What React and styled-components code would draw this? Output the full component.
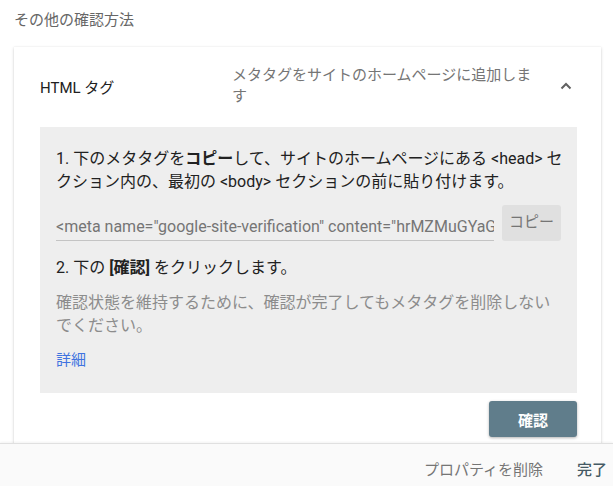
import React from "react";
import styled, { createGlobalStyle } from "styled-components";

const Global = createGlobalStyle`
  html, body { margin: 0; padding: 0; background: #fff; }
  body { font-family: Roboto, "Noto Sans CJK JP", "Noto Sans", sans-serif; }
  * { box-sizing: border-box; }
`;

const Page = styled.div`
  height: 486px;
  display: flex;
  flex-direction: column;
  overflow: hidden;
`;

const Scroll = styled.div`
  flex: 1;
  overflow: hidden;
  padding: 0 12px 0 14px;
`;

const Title = styled.div`
  font-size: 15px;
  line-height: 20px;
  color: #666;
  padding-top: 10px;
  margin-bottom: 17px;
`;

const Card = styled.div`
  background: #fff;
  box-shadow: 0 1px 3px rgba(0, 0, 0, 0.18), 0 0 1px rgba(0, 0, 0, 0.08);
  padding: 18px 24px 20px 26px;
`;

const Header = styled.div`
  display: flex;
  align-items: center;
`;

const Name = styled.div`
  width: 192px;
  font-size: 15px;
  color: #212121;
`;

const Desc = styled.div`
  width: 312px;
  font-size: 15px;
  line-height: 21px;
  color: #757575;
`;

const Chevron = styled.div`
  margin-left: 15px;
  display: flex;
  align-items: center;
`;

const Panel = styled.div`
  margin-top: 20px;
  background: #eeeeee;
  padding: 20px 16px 21px 16px;
`;

const Text = styled.div`
  font-size: 16px;
  line-height: 23px;
  color: ${(p) => (p.$muted ? "#8c8c8c" : "#212121")};
  margin-top: ${(p) => p.$mt || 0}px;
  margin-right: ${(p) => (p.$wide ? -5 : 0)}px;
`;

const InputRow = styled.div`
  display: flex;
  align-items: flex-end;
  gap: 8px;
  margin-top: 12px;
`;

const Field = styled.div`
  flex: 1;
  font-size: 16px;
  color: #757575;
  white-space: nowrap;
  overflow: hidden;
  border-bottom: 1px solid #c4c4c4;
  padding-bottom: 3px;
  line-height: 20px;
`;

const CopyBtn = styled.div`
  width: 59px;
  height: 36px;
  border-radius: 3px;
  background: #e0e0e0;
  color: #757575;
  font-size: 15px;
  display: flex;
  align-items: center;
  justify-content: center;
  padding-bottom: 6px;
`;

const Link = styled.div`
  font-size: 15px;
  line-height: 23px;
  color: #3f73e0;
  margin-top: 12px;
`;

const Actions = styled.div`
  display: flex;
  justify-content: flex-end;
  margin-top: 8px;
`;

const Confirm = styled.div`
  width: 88px;
  height: 36px;
  border-radius: 3px;
  background: #607d8b;
  color: #fff;
  font-weight: 700;
  font-size: 15px;
  display: flex;
  align-items: center;
  justify-content: center;
  box-shadow: 0 1px 3px rgba(0, 0, 0, 0.3);
`;

const Footer = styled.div`
  height: 43px;
  flex: none;
  background: #fafafa;
  border-top: 1px solid #e0e0e0;
  box-shadow: 0 -1px 2px rgba(0, 0, 0, 0.05);
  display: flex;
  align-items: center;
  justify-content: flex-end;
  gap: 34px;
  padding: 6px 6px 0 0;
  position: relative;
`;

const FootBtn = styled.div`
  font-size: 15px;
  color: ${(p) => (p.$primary ? "#455a64" : "#757575")};
  font-weight: ${(p) => (p.$primary ? 500 : 400)};
`;

export default function App() {
  return (
    <Page>
      <Global />
      <Scroll>
        <Title>その他の確認方法</Title>
        <Card>
          <Header>
            <Name>HTML タグ</Name>
            <Desc>メタタグをサイトのホームページに追加します</Desc>
            <Chevron>
              <svg width="14" height="14" viewBox="0 0 14 14">
                <path d="M2.5 9.5 L7 5 L11.5 9.5" fill="none" stroke="#616161" strokeWidth="2" />
              </svg>
            </Chevron>
          </Header>
          <Panel>
            <Text $wide>
              1. 下のメタタグを<b>コピー</b>して、サイトのホームページにある &lt;head&gt; セクション内の、最初の &lt;body&gt; セクションの前に貼り付けます。
            </Text>
            <InputRow>
              <Field>&lt;meta name="google-site-verification" content="hrMZMuGYaGxq" /&gt;</Field>
              <CopyBtn>コピー</CopyBtn>
            </InputRow>
            <Text $mt={15}>
              2. 下の <b>[確認]</b> をクリックします。
            </Text>
            <Text $muted $mt={12}>
              確認状態を維持するために、確認が完了してもメタタグを削除しないでください。
            </Text>
            <Link>詳細</Link>
          </Panel>
          <Actions>
            <Confirm>確認</Confirm>
          </Actions>
        </Card>
      </Scroll>
      <Footer>
        <FootBtn>プロパティを削除</FootBtn>
        <FootBtn $primary>完了</FootBtn>
      </Footer>
    </Page>
  );
}
